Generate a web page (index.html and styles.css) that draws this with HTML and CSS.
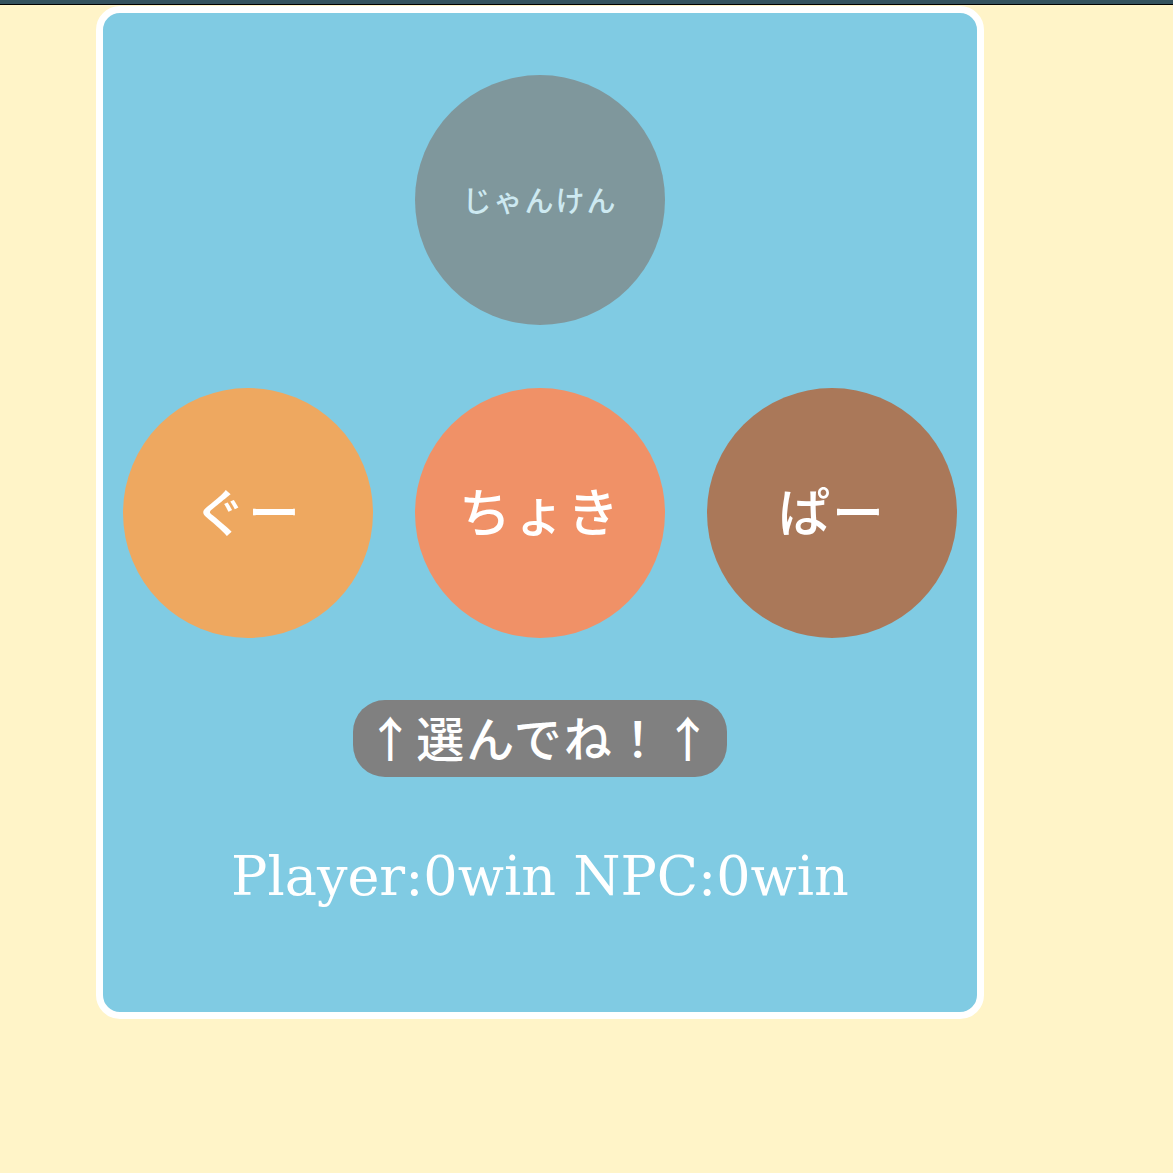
FILE: index.html
```html
<!DOCTYPE html>
<html lang="ja">
<head>
<meta charset="utf-8">
<title>じゃんけん</title>
<link rel="stylesheet" href="styles.css">
</head>
<body>
<div class="topbar"></div>
<div class="card">
  <div class="circle judge">じゃんけん</div>
  <div class="hands">
    <div class="circle hand gu">ぐー</div>
    <div class="circle hand choki">ちょき</div>
    <div class="circle hand pa">ぱー</div>
  </div>
  <div class="pill">↑選んでね！↑</div>
  <div class="score">Player:0win NPC:0win</div>
</div>
</body>
</html>
```
FILE: styles.css
```css
html, body {
  margin: 0;
  padding: 0;
  background: #fff4c8;
}
body {
  font-family: "DejaVu Serif", "Noto Sans CJK JP", serif;
  color: #fff;
}
.topbar {
  height: 4px;
  background: #34525e;
  border-bottom: 1px solid #000;
}
.card {
  box-sizing: border-box;
  width: 888px;
  height: 1013px;
  margin: 1px 0 0 96px;
  border: 7px solid #fff;
  border-radius: 24px;
  background: #80cbe3;
  display: flex;
  flex-direction: column;
  align-items: center;
  padding-top: 62px;
}
.circle {
  box-sizing: border-box;
  width: 250px;
  height: 250px;
  border-radius: 50%;
  display: flex;
  align-items: center;
  justify-content: center;
  font-family: "Noto Sans CJK JP", sans-serif;
  font-weight: 500;
}
.judge {
  background: #7f979c;
  color: #cde9f1;
  font-size: 29px;
  letter-spacing: 2px;
  padding-bottom: 2px;
}
.hands {
  box-sizing: border-box;
  width: 100%;
  padding: 0 20px;
  margin-top: 63px;
  display: flex;
  justify-content: space-between;
}
.hand {
  font-size: 52px;
  letter-spacing: 2px;
  padding-bottom: 8px;
}
.gu { background: #eea860; }
.choki { background: #f09167; }
.pa { background: #aa7859; }
.pill {
  box-sizing: border-box;
  margin-top: 62px;
  width: 374px;
  height: 77px;
  border-radius: 32px;
  background: #808080;
  display: flex;
  align-items: center;
  justify-content: center;
  font-family: "Noto Sans CJK JP", sans-serif;
  font-weight: 500;
  font-size: 48px;
  letter-spacing: 2px;
  padding-bottom: 6px;
}
.score {
  margin-top: 68px;
  font-size: 54px;
  line-height: 63px;
  white-space: nowrap;
}
```
